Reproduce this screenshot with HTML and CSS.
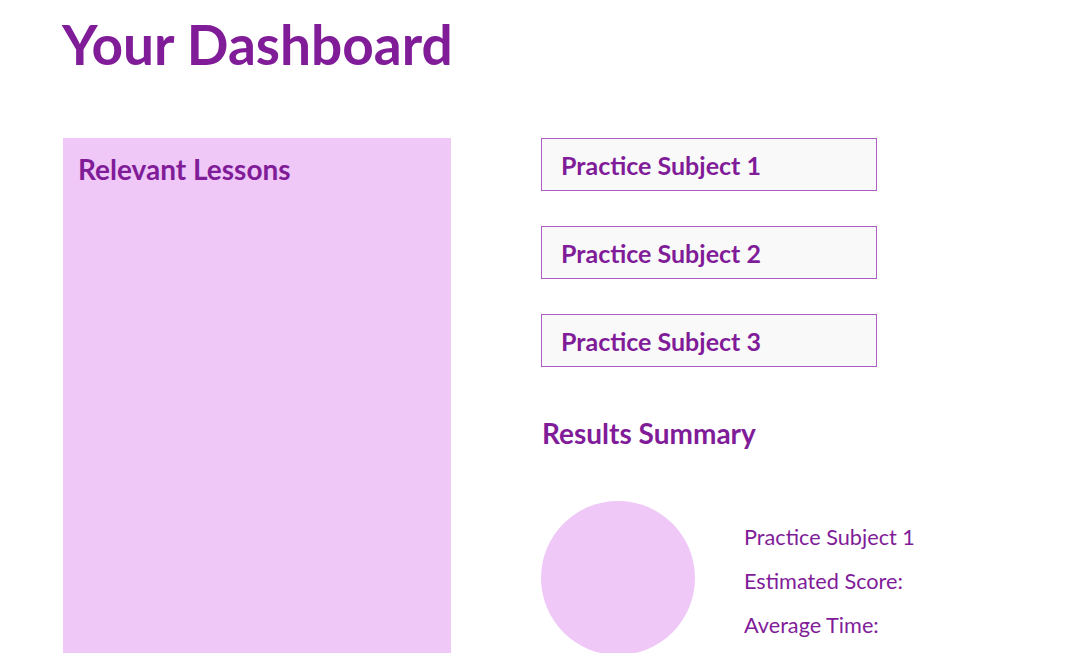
FILE: index.html
```html
<!DOCTYPE html>
<html lang="en">
<head>
<meta charset="utf-8">
<title>Your Dashboard</title>
<link rel="stylesheet" href="styles.css">
</head>
<body>
<main class="page">
  <h1 class="title">Your Dashboard</h1>
  <div class="layout">
    <section class="lessons">
      <h2 class="lessons-title">Relevant Lessons</h2>
    </section>
    <section class="side">
      <div class="subjects">
        <div class="subject">Practice Subject 1</div>
        <div class="subject">Practice Subject 2</div>
        <div class="subject">Practice Subject 3</div>
      </div>
      <h2 class="results-title">Results Summary</h2>
      <div class="summary">
        <div class="chart"></div>
        <ul class="stats">
          <li>Practice Subject 1</li>
          <li>Estimated Score:</li>
          <li>Average Time:</li>
        </ul>
      </div>
    </section>
  </div>
</main>
</body>
</html>
```
FILE: styles.css
```css
html, body {
  margin: 0;
  padding: 0;
  background: #ffffff;
}
body {
  font-family: Lato, "Open Sans", sans-serif;
  color: #811c99;
}
.page {
  padding: 0 0 0 62px;
}
.title {
  margin: 0;
  padding-top: 12px;
  font-size: 55px;
  line-height: 64px;
  font-weight: 700;
  color: #811c99;
}
.layout {
  display: flex;
  align-items: flex-start;
  gap: 90px;
  margin-top: 62px;
}
.lessons {
  width: 388px;
  height: 560px;
  background: #efc8f8;
  margin-left: 1px;
  box-sizing: border-box;
  padding: 16px 15px;
}
.lessons-title {
  margin: 0;
  font-size: 28px;
  line-height: 30px;
  font-weight: 700;
}
.side {
  width: 336px;
}
.subjects {
  display: flex;
  flex-direction: column;
  gap: 35px;
}
.subject {
  height: 53px;
  box-sizing: border-box;
  border: 1px solid #ad5ec4;
  background: #f9f9f9;
  padding: 0 19px;
  display: flex;
  align-items: center;
  font-size: 25px;
  font-weight: 700;
}
.results-title {
  margin: 48px 0 0 1px;
  font-size: 28px;
  line-height: 36px;
  font-weight: 700;
}
.summary {
  display: flex;
  align-items: flex-start;
  gap: 49px;
  margin-top: 50px;
}
.chart {
  width: 154px;
  height: 154px;
  border-radius: 50%;
  background: #efc8f8;
  flex: none;
}
.stats {
  list-style: none;
  margin: 14px 0 0;
  padding: 0;
  font-size: 21.7px;
  line-height: 44px;
  white-space: nowrap;
}
```
